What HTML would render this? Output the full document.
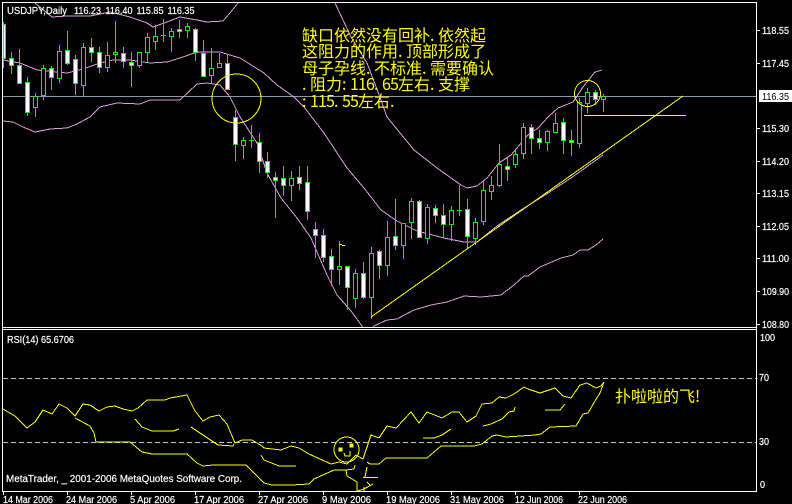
<!DOCTYPE html>
<html><head><meta charset="utf-8"><title>USDJPY Daily</title>
<style>
html,body{margin:0;padding:0;background:#000;width:792px;height:504px;overflow:hidden}
svg{display:block}
.t{font-family:"Liberation Sans",sans-serif;font-size:10px;fill:#fff;stroke:#fff;stroke-width:.2px}
.c{font-family:"WenQuanYi Zen Hei","Noto Sans CJK SC",sans-serif;font-size:16px;fill:#ff0}
</style></head><body>
<svg width="792" height="504" viewBox="0 0 792 504" xmlns="http://www.w3.org/2000/svg">
<rect width="792" height="504" fill="#000"/>
<defs><clipPath id="m"><rect x="3" y="3" width="753" height="324"/></clipPath></defs>
<g shape-rendering="crispEdges" fill="none">
<path stroke="#8899aa" d="M3 96.5H756"/>
<g clip-path="url(#m)">
<path stroke="#dda0dd" d="M35 3L52 17L67 16L90 16L110 12L130 17L147 23L153 27L167 22L180 17L197 20L207 22L223 21L230 13L238 3M335 3L351 37L367 63L381 100L387 117L414 150L437 168L461 185L467 188L477 186L487 178L499 163L511 155L528 135L538 128L548 117L558 108L573 102L583 87L595 72L602 70"/>
<path stroke="#dda0dd" d="M3 60L20 63L37 70L67 73L83 69L100 63L113 60L130 60L150 63L167 62L180 58L197 52L220 52L240 58L264 73L277 85L294 97L304 107L324 133L347 168L364 188L381 210L397 221L417 231L444 238L464 242L477 242L497 226L521 210L545 195L571 178L585 168L603 155"/>
<path stroke="#dda0dd" d="M3 121L13 122L23 127L35 132L50 129L67 128L77 124L90 117L100 107L117 103L140 104L150 100L180 100L197 84L207 83L220 85L230 97L240 117L257 143L267 173L281 198L297 218L311 238L327 275L337 295L351 311L362 326L364 330M372 330L374 326L387 320L397 319L414 310L431 305L447 302L464 296L481 297L501 295L514 285L524 276L528 276L540 267L561 258L573 255L580 250L588 250L596 245L603 239"/>
</g>
<g shape-rendering="geometricPrecision">
<path stroke="#00ff00" d="M3.5 22V68M11.5 52V74M19.5 49V84M27.5 77V116M35.5 93V117M43.5 65V100M51.5 66V90M59.5 45V83M67.5 31V65M75.5 55V95M83.5 43V96M91.5 38V62M99.5 47V73M107.5 42V72M115.5 21V63M123.5 47V68M131.5 52V87M139.5 52V68M147.5 33V62M155.5 25V50M163.5 19V42M171.5 28V52M179.5 20V38M187.5 23V38M195.5 28V61M203.5 40V77M211.5 48V83M219.5 53V68M227.5 55V90M235.5 110V161M243.5 137V159M251.5 125V148M259.5 133V173M267.5 152V178M275.5 172V218M283.5 166V196M291.5 171V201M299.5 166V190M307.5 166V220M315.5 222V258M323.5 229V262M331.5 249V286M339.5 241V285M347.5 266V310M355.5 269V308M363.5 262V299M371.5 247V319M379.5 250V279M387.5 221V276M395.5 199V250M403.5 223V259M411.5 198V239M419.5 200V238M427.5 204V244M435.5 205V223M443.5 204V238M451.5 206V241M459.5 185V216M467.5 199V248M475.5 218V245M483.5 181V225M491.5 176V200M499.5 144V187M507.5 157V181M515.5 150V168M523.5 123V159M531.5 124V154M539.5 130V149M547.5 130V151M555.5 113V132M563.5 118V154M571.5 130V156M579.5 98V148M587.5 88V113M595.5 90V105M603.5 94V112"/>
<path stroke="#00ff00" d="M161 35.500h5M249 140.500h5M457 210.500h5"/>
<path stroke="#00ff00" fill="#000" d="M33.500 96.500h4v11h-4zM41.500 68.500h4v27h-4zM57.500 51.500h4v27h-4zM81.500 47.500h4v38h-4zM105.500 55.500h4v12h-4zM113.500 52.500h4v2h-4zM137.500 52.500h4v13h-4zM145.500 37.500h4v15h-4zM153.500 36.500h4v5h-4zM169.500 31.500h4v5h-4zM185.500 26.500h4v4h-4zM209.500 68.500h4v7h-4zM217.500 63.500h4v4h-4zM241.500 140.500h4v5h-4zM289.500 178.500h4v7h-4zM337.500 266.500h4v3h-4zM353.500 273.500h4v25h-4zM369.500 253.500h4v44h-4zM385.500 237.500h4v28h-4zM401.500 223.500h4v22h-4zM409.500 201.500h4v21h-4zM425.500 207.500h4v31h-4zM449.500 210.500h4v14h-4zM473.500 222.500h4v16h-4zM481.500 190.500h4v31h-4zM489.500 185.500h4v6h-4zM497.500 164.500h4v21h-4zM513.500 154.500h4v10h-4zM521.500 127.500h4v26h-4zM545.500 131.500h4v11h-4zM553.500 123.500h4v9h-4zM577.500 102.500h4v41h-4zM585.500 92.500h4v11h-4zM601.500 96.500h4v3h-4z"/>
<path stroke="#00ff00" fill="#fff" d="M3.500 24.500h2v34h-2zM9.500 58.500h4v7h-4zM17.500 65.500h4v18h-4zM25.500 82.500h4v30h-4zM49.500 68.500h4v9h-4zM65.500 50.500h4v13h-4zM73.500 59.500h4v24h-4zM89.500 47.500h4v5h-4zM97.500 52.500h4v15h-4zM121.500 53.500h4v8h-4zM129.500 62.500h4v3h-4zM177.500 29.500h4v2h-4zM193.500 29.500h4v23h-4zM201.500 53.500h4v23h-4zM225.500 63.500h4v26h-4zM233.500 117.500h4v27h-4zM257.500 142.500h4v19h-4zM265.500 161.500h4v11h-4zM273.500 177.500h4v3h-4zM281.500 178.500h4v7h-4zM297.500 177.500h4v6h-4zM305.500 182.500h4v29h-4zM313.500 229.500h4v6h-4zM321.500 235.500h4v22h-4zM329.500 256.500h4v13h-4zM345.500 266.500h4v21h-4zM361.500 273.500h4v24h-4zM377.500 251.500h4v14h-4zM393.500 236.500h4v9h-4zM417.500 201.500h4v36h-4zM433.500 208.500h4v7h-4zM441.500 215.500h4v9h-4zM465.500 209.500h4v27h-4zM505.500 166.500h4v3h-4zM529.500 127.500h4v11h-4zM537.500 138.500h4v4h-4zM561.500 122.500h4v18h-4zM569.500 140.500h4v2h-4zM593.500 92.500h4v7h-4z"/>
</g>
<g stroke="#ff0">
<circle cx="236.500" cy="98.500" r="24.500"/>
<circle cx="587.500" cy="93.500" r="13"/>
<path d="M371 317L683 96M584 115.500H686M339 244.500h3M342 245.500h3"/>
</g>
<g stroke="#fff">
<path d="M2.500 2V492M2 2.500H757M756.500 2V492M2 327.500H757M2 329.500H757M2 491.500H757"/>
<path d="M757 30.500h3M757 63.500h3M757 128.500h3M757 161.500h3M757 193.500h3M757 226.500h3M757 258.500h3M757 291.500h3M757 324.500h3"/>
<path d="M3.500 491V495M67.500 491V495M131.500 491V495M195.500 491V495M259.500 491V495M323.500 491V495M387.500 491V495M451.500 491V495M515.500 491V495M579.500 491V495"/>
</g>
<path stroke="#c8c8c8" stroke-dasharray="5 3" d="M3 378.500H756M3 442.500H756"/>
<g stroke="#ff0">
<path d="M3 409L8 412L15 416L20 421L27 428L35 422L43 410L52 414L59 404L67 408L75 416L83 404L90 405L99 411L107 407L115 406L123 409L132 411L138 408L147 400L165 400L170 398L187 395L195 411L203 421L210 417L219 415L227 424L235 443L242 440L252 440L262 446L264 448L281 450L291 446L299 448L309 454L331 464L339 462L347 464L356 455L363 459L371 435L379 438L387 426L396 428L411 412L419 423L427 412L442 418L452 412L459 412L467 422L476 416L482 404L492 403L499 397L506 398L514 394L524 387L528 389L540 393L555 388L563 396L571 398L580 385L587 383L596 388L601 386L604 382"/>
<path d="M75 418L90 426L94 433L96 442L130 442L142 452L152 454L187 454L197 463L203 466L213 465L246 465L264 483L272 485L292 485L309 484L314 479L334 470L346 470L354 469L355 465M367 462L370 464L379 464L386 458L407 458L427 458L441 446L474 446L482 444L492 436L497 435L506 437L535 435L541 434L550 427L576 426L583 414L588 413L595 401L600 393L604 382"/>
<path d="M135 419L142 427L152 431L173 431L179 429M191 427L200 433L218 445L233 446L234 444M261 455L264 460L279 466L296 466M423 438L434 438L442 435L451 429M483 426L491 424L502 419L509 412L514 411L515 407M545 410L560 410L565 404"/>
<circle cx="346.500" cy="449.500" r="12.500"/>
<path d="M350 451V456H345L344 453M346 470L347 476L357 482V491L364 489L373 484M367 482L370 485M364 487V491M367 467L365 477M363 477.500H378"/>
<path fill="#ff0" d="M339 448h3v3h-3zM350 444h3v3h-3z"/>
</g>
</g>
<rect x="759" y="90" width="33" height="12" fill="#fff"/>
<text x="762" y="100" textLength="27" lengthAdjust="spacingAndGlyphs" style="font-family:'Liberation Sans',sans-serif;font-size:10px;fill:#000">116.35</text>
<g>
<text class="t" x="7" y="14" textLength="60" lengthAdjust="spacingAndGlyphs">USDJPY,Daily</text>
<text class="t" x="74" y="14" textLength="27" lengthAdjust="spacingAndGlyphs">116.23</text>
<text class="t" x="105.500" y="14" textLength="27" lengthAdjust="spacingAndGlyphs">116.40</text>
<text class="t" x="136.500" y="14" textLength="27" lengthAdjust="spacingAndGlyphs">115.85</text>
<text class="t" x="167.500" y="14" textLength="27" lengthAdjust="spacingAndGlyphs">116.35</text>
<text class="t" x="762" y="34" textLength="27" lengthAdjust="spacingAndGlyphs">118.55</text>
<text class="t" x="762" y="67" textLength="27" lengthAdjust="spacingAndGlyphs">117.45</text>
<text class="t" x="762" y="132" textLength="27" lengthAdjust="spacingAndGlyphs">115.30</text>
<text class="t" x="762" y="165" textLength="27" lengthAdjust="spacingAndGlyphs">114.20</text>
<text class="t" x="762" y="197" textLength="27" lengthAdjust="spacingAndGlyphs">113.15</text>
<text class="t" x="762" y="230" textLength="27" lengthAdjust="spacingAndGlyphs">112.05</text>
<text class="t" x="762" y="262" textLength="27" lengthAdjust="spacingAndGlyphs">111.00</text>
<text class="t" x="762" y="295" textLength="27" lengthAdjust="spacingAndGlyphs">109.90</text>
<text class="t" x="762" y="328" textLength="27" lengthAdjust="spacingAndGlyphs">108.80</text>
<text class="t" x="760" y="341" textLength="15" lengthAdjust="spacingAndGlyphs">100</text>
<text class="t" x="759" y="381" textLength="10" lengthAdjust="spacingAndGlyphs">70</text>
<text class="t" x="759" y="445" textLength="10" lengthAdjust="spacingAndGlyphs">30</text>
<text class="t" x="760" y="488" textLength="5" lengthAdjust="spacingAndGlyphs">0</text>
<text class="t" x="7" y="343" textLength="67" lengthAdjust="spacingAndGlyphs">RSI(14) 65.6706</text>
<text class="t" x="6" y="482" textLength="236" lengthAdjust="spacingAndGlyphs">MetaTrader, _ 2001-2006 MetaQuotes Software Corp.</text>
<text class="t" x="3" y="503" textLength="50" lengthAdjust="spacingAndGlyphs">14 Mar 2006</text>
<text class="t" x="66" y="503" textLength="51" lengthAdjust="spacingAndGlyphs">24 Mar 2006</text>
<text class="t" x="130" y="503" textLength="45" lengthAdjust="spacingAndGlyphs">5 Apr 2006</text>
<text class="t" x="194" y="503" textLength="50" lengthAdjust="spacingAndGlyphs">17 Apr 2006</text>
<text class="t" x="258" y="503" textLength="50" lengthAdjust="spacingAndGlyphs">27 Apr 2006</text>
<text class="t" x="322" y="503" textLength="49" lengthAdjust="spacingAndGlyphs">9 May 2006</text>
<text class="t" x="386" y="503" textLength="54" lengthAdjust="spacingAndGlyphs">19 May 2006</text>
<text class="t" x="450" y="503" textLength="54" lengthAdjust="spacingAndGlyphs">31 May 2006</text>
<text class="t" x="515" y="503" textLength="48" lengthAdjust="spacingAndGlyphs">12 Jun 2006</text>
<text class="t" x="578" y="503" textLength="49" lengthAdjust="spacingAndGlyphs">22 Jun 2006</text>
</g>
<text class="c" y="41" x="302 318 334 350 366 382 398 414 430 438 454 470">缺口依然没有回补.依然起</text>
<text class="c" y="57" x="302 318 334 350 366 382 398 406 422 438 454 470">这阻力的作用.顶部形成了</text>
<text class="c" y="74" x="302 318 334 350 366 374 390 406 422 430 446 462 478">母子孕线.不标准.需要确认</text>
<text class="c" y="90" x="302 310 326 342 350 358 366 374 382 390 398 414 430 438 454">.阻力:116.65左右.支撑</text>
<text class="c" y="107" x="302 310 318 326 334 342 350 358 374 390">:115.55左右.</text>
<text class="c" y="402" x="615 631 647 663 679 695">扑啦啦的飞!</text>
</svg>
</body></html>
